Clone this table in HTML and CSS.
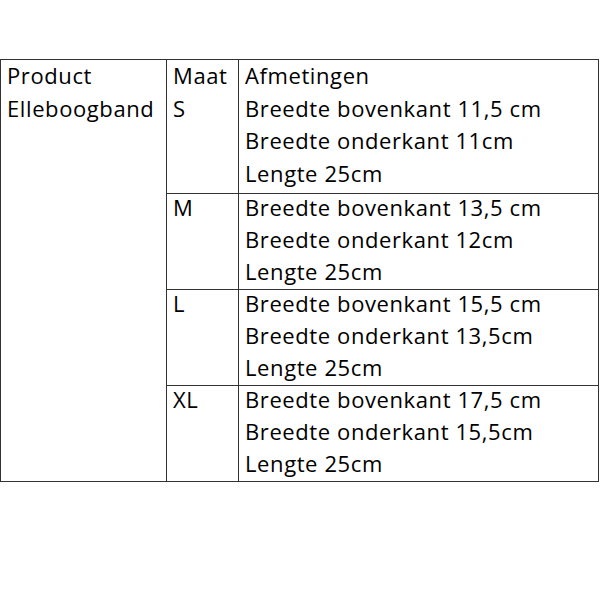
FILE: index.html
```html
<!DOCTYPE html>
<html>
<head>
<meta charset="utf-8">
<link rel="stylesheet" href="styles.css">
</head>
<body>
<table class="size-table">
  <tr class="row-first">
    <td class="col-product" rowspan="4"><div class="cell">Product<br>Elleboogband</div></td>
    <td class="col-size"><div class="cell">Maat<br>S</div></td>
    <td class="col-dims"><div class="cell">Afmetingen<br>Breedte bovenkant 11,5 cm<br>Breedte onderkant 11cm<br>Lengte 25cm</div></td>
  </tr>
  <tr class="row">
    <td class="col-size"><div class="cell">M</div></td>
    <td class="col-dims"><div class="cell">Breedte bovenkant 13,5 cm<br>Breedte onderkant 12cm<br>Lengte 25cm</div></td>
  </tr>
  <tr class="row">
    <td class="col-size"><div class="cell">L</div></td>
    <td class="col-dims"><div class="cell">Breedte bovenkant 15,5 cm<br>Breedte onderkant 13,5cm<br>Lengte 25cm</div></td>
  </tr>
  <tr class="row">
    <td class="col-size"><div class="cell">XL</div></td>
    <td class="col-dims"><div class="cell">Breedte bovenkant 17,5 cm<br>Breedte onderkant 15,5cm<br>Lengte 25cm</div></td>
  </tr>
</table>
</body>
</html>
```

FILE: styles.css
```css
html, body {
  margin: 0;
  padding: 0;
  background: #fff;
}
body {
  padding-top: 59px;
}
.size-table {
  border-collapse: collapse;
  width: 599px;
  table-layout: fixed;
  font-family: "Open Sans", Lato, sans-serif;
  font-size: 22px;
  letter-spacing: 0.6px;
  line-height: 32px;
  color: #000;
}
.size-table td {
  border: 1px solid #333;
  vertical-align: top;
  padding: 0 0 0 6px;
  white-space: nowrap;
}
.col-product { width: 159px; }
.col-size { width: 65px; }
.row-first td { height: 133px; }
.row-first .cell {
  margin-top: -1px;
  line-height: 32.6px;
}
.row td { height: 95px; }
.row .cell {
  height: 95px;
  margin-top: -3px;
  margin-bottom: 3px;
}
```
